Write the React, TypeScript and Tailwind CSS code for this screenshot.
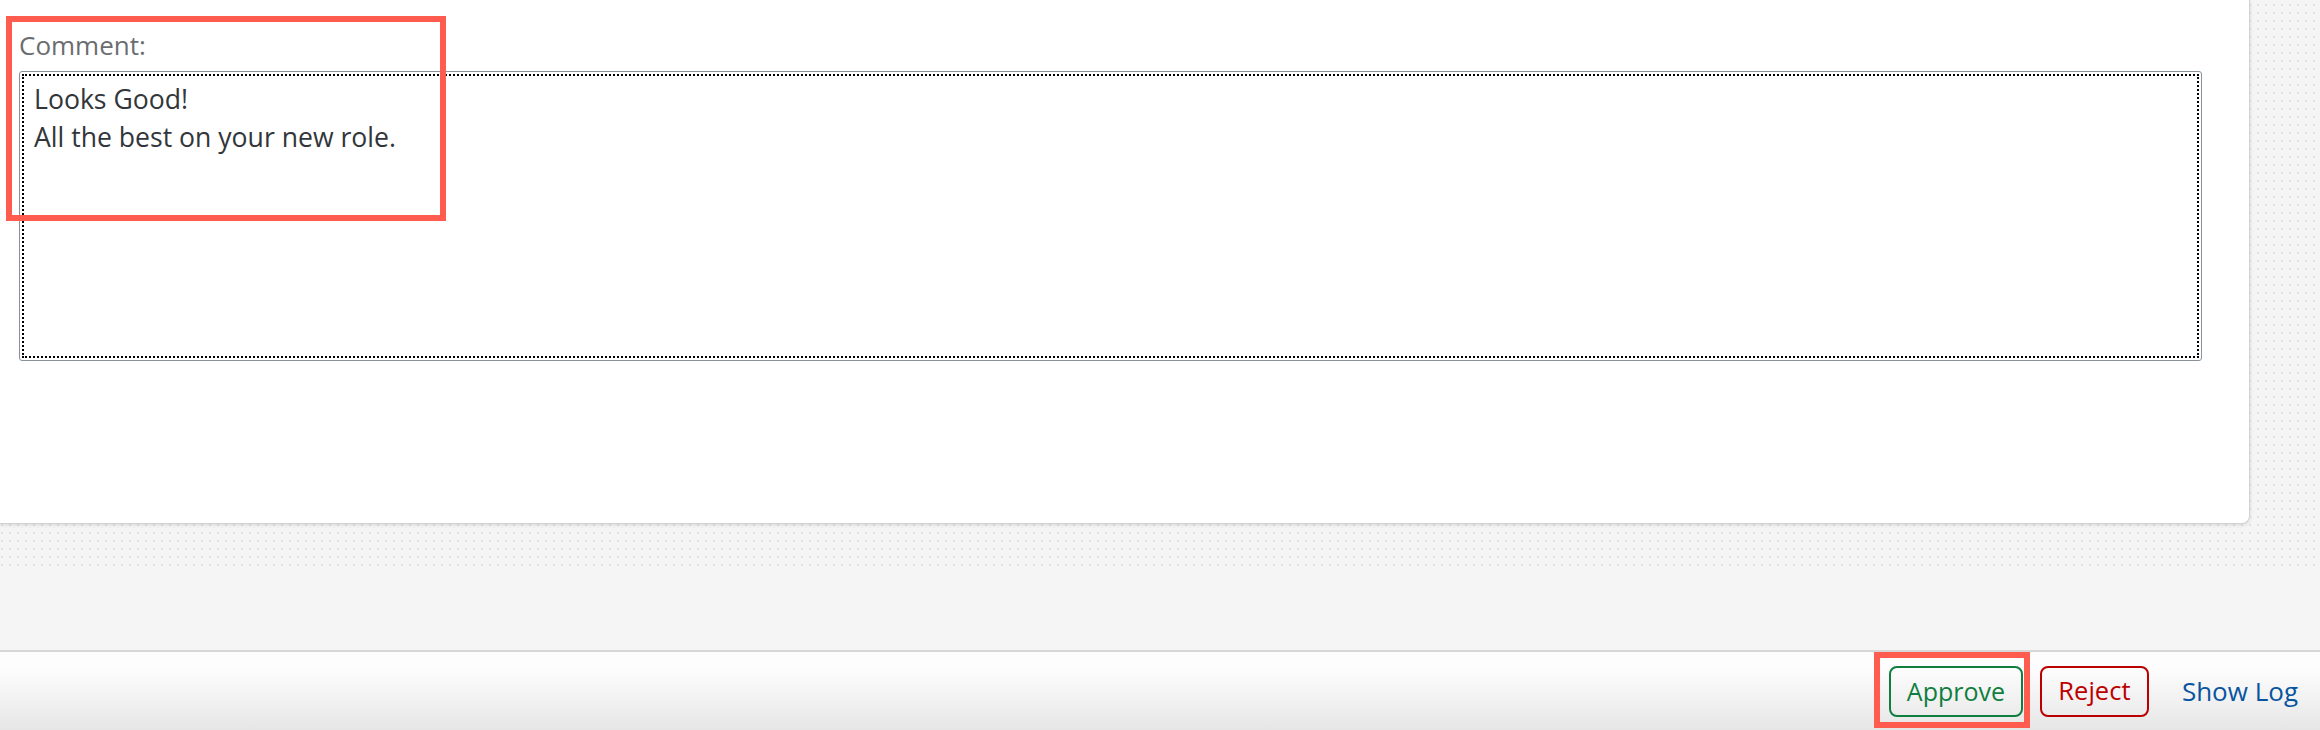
import React from "react";

export default function App() {
  return (
    <div className="w-[2320px] h-[730px] overflow-hidden flex flex-col bg-[#f5f5f5] font-['Open_Sans',sans-serif] relative">
      {/* content area with dotted pattern */}
      <div className="h-[570px] shrink-0 bg-[#f5f5f5] bg-[radial-gradient(circle_at_2px_2px,#e3e3e3_1px,transparent_1.6px)] bg-[length:8px_8px] bg-[position:0px_3px]">
        <div className="w-[2250px] h-[524px] bg-white border-r border-b border-[#d2d2d2] rounded-br-[8px] shadow-[0_1px_4px_rgba(0,0,0,0.12)] pt-[27px] pl-[19px]">
          <div className="text-[26px] leading-[36px] text-[#6a6d70]">Comment:</div>
          <textarea
            readOnly
            value={"Looks Good!\nAll the best on your new role."}
            className="mt-[8px] block w-[2183px] h-[290px] resize-none border border-[#89919a] rounded-[3px] bg-white pt-[8px] pl-[14px] text-[26.6px] leading-[38px] text-[#32363a] outline-2 outline-dotted outline-black outline-offset-[-5px] font-['Open_Sans',sans-serif]"
          />
        </div>
      </div>
      <div className="h-[80px] shrink-0 bg-[#f5f5f5]" />
      {/* footer */}
      <div className="h-[80px] shrink-0 border-t-2 border-[#d7d7d7] bg-gradient-to-b from-[#fdfdfd] from-20% to-[#e6e6e6] flex items-center justify-end pr-[6px]">
        <button className="h-[51px] w-[134px] border-2 border-[#107e3e] rounded-[8px] text-[#107e3e] text-[25px] leading-none flex items-center justify-center">
          Approve
        </button>
        <button className="ml-[17px] h-[51px] w-[109px] border-2 border-[#bb0000] rounded-[8px] text-[#bb0000] text-[25.5px] leading-none flex items-center justify-center">
          Reject
        </button>
        <button className="ml-[17px] h-[51px] px-[16px] text-[#0854a0] text-[26px] leading-none flex items-center">
          Show Log
        </button>
      </div>
      {/* annotation boxes */}
      <div className="absolute left-[6px] top-[16px] w-[440px] h-[205px] border-[6px] border-[#ff5b4f] pointer-events-none" />
      <div className="absolute left-[1874px] top-[652px] w-[156px] h-[76px] border-[6px] border-[#ff5b4f] pointer-events-none" />
    </div>
  );
}
